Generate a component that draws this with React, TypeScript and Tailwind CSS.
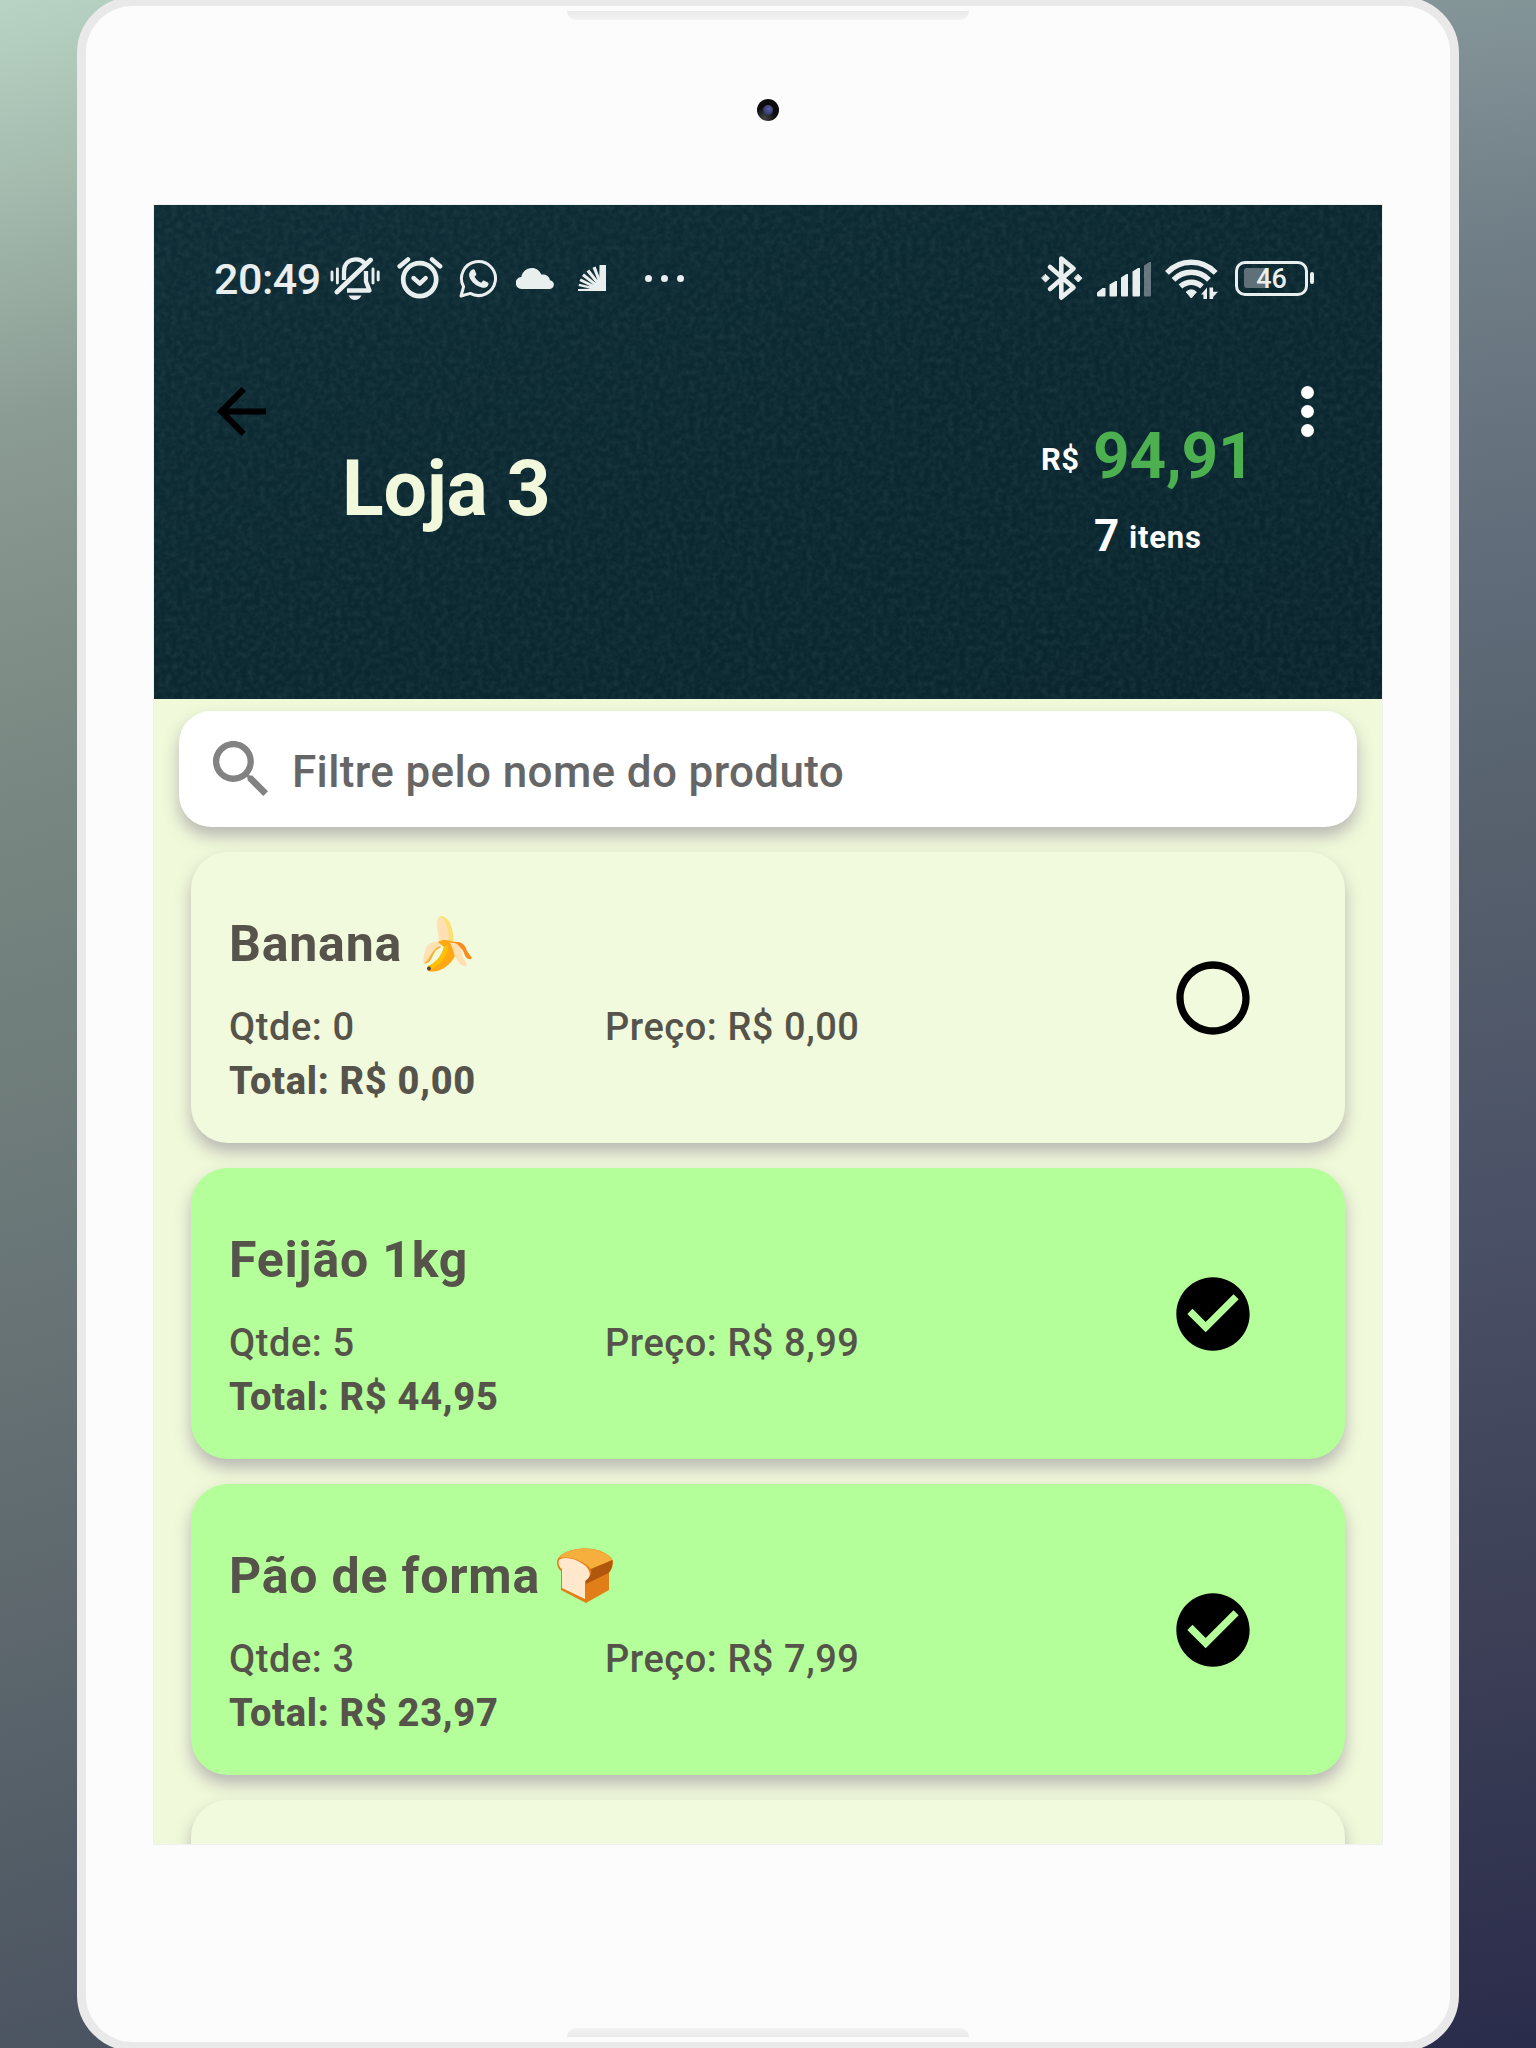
import type { ReactNode } from "react";

function MutedBell() {
  return (
    <svg width="50" height="44" viewBox="0 0 50 44" fill="none" stroke="#e9eeee" strokeWidth="4.300">
      <path d="M14 23V14.500C14 7 18.500 2.800 25.500 2.400c4-.2 7 1.400 9 3.600" />
      <path d="M36 14v10.500l3.500 9H17" strokeLinejoin="round" />
      <path d="M40.500 3 7 35" strokeWidth="4.800" strokeLinecap="round" />
      <path d="M2 15v8M7.400 12v14M43 12v14M48.200 15v8" strokeWidth="2.900" strokeLinecap="round" />
      <path d="M18.500 38.500h13c-1.500 3-4 4.500-6.500 4.500s-5-1.500-6.500-4.500Z" fill="#e9eeee" stroke="none" />
    </svg>
  );
}

function AlarmClock() {
  return (
    <svg width="46" height="42" viewBox="0 0 46 42" fill="none" stroke="#e9eeee" strokeLinecap="round" strokeLinejoin="round">
      <circle cx="22.700" cy="22.600" r="16.500" strokeWidth="4.700" />
      <path d="M16.500 21l6.300 5.700 5.900-5.700" strokeWidth="4.400" />
      <path d="M2.700 9.300 11 2.500M43.100 9.300 35 2.500" strokeWidth="4.600" />
    </svg>
  );
}

function WhatsApp() {
  return (
    <svg width="39" height="39" viewBox="0 0 39 39">
      <path d="M2 37l2.600-9.300A17 17 0 1 1 11.300 34.400Z" fill="none" stroke="#e9eeee" strokeWidth="3" strokeLinejoin="round" />
      <path d="M12.600 10.900c1-.9 2.500-1 3.100.2l1.500 3.600c.3.900-.1 1.500-1.600 3.100 1.400 2.700 3.600 4.700 6.600 6 1.800-2.200 2.200-2.500 3.100-2.100l3.500 1.700c.9.600.8 1.500.5 2.500-1 2.500-4.100 3.300-6.600 2.600-5.800-1.600-9.900-5-12-9.700-1.200-3-.6-6.200 1.900-7.900Z" fill="#e9eeee" />
    </svg>
  );
}

function Cloud() {
  return (
    <svg width="38" height="21" viewBox="0 0 38 21" fill="#e9eeee">
      <path d="M6 21a6 6 0 0 1-.7-12C6.500 3.500 10.500 0 15.800 0c4.500 0 7.800 2.500 9.500 6.500 5-.7 8.300 2 8.600 5.700 2.400.4 4 2.200 4 4.300 0 2.700-2 4.500-4.700 4.500Z" />
    </svg>
  );
}

function Fan() {
  return (
    <svg width="28" height="26" viewBox="0 0 28 26" fill="#e9eeee">
      <path d="M21.500 0H28v26h-7Z" />
      <path d="M22.500 22 14.500 2.800l3.200-1.300L25 22ZM22 23 8.500 6.500l2.700-2L25 22ZM21 24 4 11l2-2.500L24 23ZM20 25 1.500 16l1.300-2.600L24 24ZM20 25.500.5 21l.7-2.300L24 24ZM0 24l22-.5V26H0Z" />
    </svg>
  );
}

function Bluetooth() {
  return (
    <svg width="42" height="46" viewBox="0 0 42 46" fill="none" stroke="#e9eeee" strokeWidth="4.600" strokeLinejoin="round" strokeLinecap="round">
      <path d="M9 12l23.500 20.500L20.300 42.500V3.500L32.500 13.500 9 34" />
      <path d="M4.500 19.500 8.500 23.200 4.500 27 .8 23.200ZM37.300 19.500 41 23.200 37.300 27 33.500 23.200Z" fill="#e9eeee" strokeWidth="1" />
    </svg>
  );
}

function Signal() {
  return (
    <svg width="54" height="35" viewBox="0 0 54 35" fill="#e9eeee">
      <path d="M0 30.500 5.500 26H8.500v7.500Q8.500 34.500 7.500 34.500H1Q0 34.500 0 33.500ZM12.500 22.500 18.500 19h1.500v14.500q0 1-1 1H13.500q-1 0-1-1ZM24 15.500l5.500-3.500h1.500v21.500q0 1-1 1h-5q-1 0-1-1ZM35.500 9.500 41 6h2v27.500q0 1-1 1h-5.500q-1 0-1-1Z" />
      <path d="M47 3.500 52.500 0H54v33.500q0 1-1 1h-5q-1 0-1-1Z" opacity=".4" />
    </svg>
  );
}

function Wifi() {
  return (
    <svg width="54" height="41" viewBox="0 0 54 41" fill="none" stroke="#e9eeee" strokeWidth="5.400">
      <path d="M1.900 13.800Q12 3.200 26.300 3.200t24.400 10.600" />
      <path d="M8.500 20.800Q16 13.200 26.300 13.200T44 20.800" />
      <path d="M15.500 27.500q4.800-4.300 10.800-4.300T37 27.500" />
      <path d="M21.200 33q5.100-4.500 10.200 0l-5.100 6Z" fill="#e9eeee" stroke="#e9eeee" strokeWidth="1" />
      <path d="M36 35.500l6-7V40h-3.600v-4.500ZM44.500 40V28.500h3.600v4.300H53L48.100 38v2Z" fill="#e9eeee" stroke="none" />
    </svg>
  );
}

function Battery() {
  return (
    <div className="flex items-center">
      <div className="relative flex h-[35px] w-[73px] items-center justify-center rounded-[10px] border-[3.500px] border-[#e9eeee]">
        <div className="absolute left-[6px] h-[20px] w-[24px] rounded-[3px] bg-[#5f7078]" />
        <span className="relative pt-[2px] text-[27px] leading-[29px] font-medium text-[#e9eeee]">46</span>
      </div>
      <div className="ml-[2px] h-[12px] w-[4px] rounded-[2px] bg-[#e9eeee]" />
    </div>
  );
}

function StatusBar() {
  return (
    <div className="flex h-[46px] items-center pl-[60px] pr-[68px]">
      <span className="w-[116px] pt-[2px] text-[43px] leading-[46px] font-medium tracking-[-0.5px] text-[#e9eeee]">20:49</span>
      <div className="mt-[2px]"><MutedBell /></div>
      <div className="ml-[17px]"><AlarmClock /></div>
      <div className="ml-[16px]"><WhatsApp /></div>
      <div className="ml-[18px]"><Cloud /></div>
      <div className="ml-[24px]"><Fan /></div>
      <div className="ml-[39px] flex gap-[9px]">
        <i className="size-[7px] rounded-full bg-[#e9eeee]" />
        <i className="size-[7px] rounded-full bg-[#e9eeee]" />
        <i className="size-[7px] rounded-full bg-[#e9eeee]" />
      </div>
      <div className="ml-auto"><Bluetooth /></div>
      <div className="ml-[14px] mt-[3px]"><Signal /></div>
      <div className="ml-[14px] mt-[2px]"><Wifi /></div>
      <div className="ml-[16px]"><Battery /></div>
    </div>
  );
}

function FabricTexture() {
  return (
    <svg className="absolute inset-0 size-full">
      <filter id="grain" x="0" y="0" width="100%" height="100%">
        <feTurbulence type="fractalNoise" baseFrequency="0.17" numOctaves="2" seed="4" />
        <feColorMatrix values="0 0 0 0 0.25  0 0 0 0 0.36  0 0 0 0 0.38  1.200 0 0 0 -0.4" />
      </filter>
      <rect width="100%" height="100%" filter="url(#grain)" opacity=".17" />
    </svg>
  );
}

function Header() {
  return (
    <header className="relative h-[494px] shrink-0 bg-linear-to-br from-[#0f2d36] via-[#0b2831] to-[#09242d] pt-[50px]">
      <FabricTexture />
      <div className="relative">
        <StatusBar />
        <div className="flex pl-[63px] pt-[85px]">
          <svg className="mt-px" width="49" height="49" viewBox="4 4 16 16" fill="#000">
            <path d="M20 11H7.830l5.590-5.590L12 4l-8 8 8 8 1.410-1.410L7.830 13H20v-2z" />
          </svg>
          <h1 className="ml-[76px] mt-[58px] w-[699px] text-[77px] leading-[90px] font-bold tracking-[-0.2px] text-[#f1f8dc]">Loja 3</h1>
          <div className="mt-[34px] w-[260px]">
            <div className="flex items-baseline">
              <span className="relative -top-[8px] w-[52px] text-[31px] leading-[74px] font-bold tracking-[0.5px] text-white">R$</span>
              <span className="text-[64px] leading-[74px] font-bold tracking-[-0.2px] text-[#4caf50]">94,91</span>
            </div>
            <div className="mt-[5px] flex items-baseline pl-[53px]">
              <span className="w-[35px] text-[44px] leading-[52px] font-bold text-white">7</span>
              <span className="relative -top-[3px] text-[31px] font-bold tracking-[0.8px] text-white">itens</span>
            </div>
          </div>
          <div className="flex flex-col gap-[6px]">
            <i className="size-[13px] rounded-full bg-white" />
            <i className="size-[13px] rounded-full bg-white" />
            <i className="size-[13px] rounded-full bg-white" />
          </div>
        </div>
      </div>
    </header>
  );
}

function Banana() {
  return (
    <svg width="58" height="58" viewBox="0 0 58 58">
      <path d="M20 3c3-4 11 0 13 8 2 7 3 13 2 18l-14-1C21 18 17 9 20 3Z" fill="#ffe0b2" />
      <path d="M22 1.500c5-1.500 10 4 12 12 1.500 6 1.500 13 .5 17l-4-2C32 19 29 5 22 1.500Z" fill="#fde074" />
      <path d="M22 27c-8-1-13 2-15 9-1 4-2 8-1.500 12 4-1 6-5 8-9s5-8 10-9Z" fill="#ffe0b2" />
      <path d="M6 48c4-2 5-6 8-10s5-7 9-7l-1 2c-6 2-7 9-10 13-2 2-4 3-6 2Z" fill="#f9b233" />
      <path d="M20 27c5-3 10-2 16 0 4 9 2 16-5 22-6 6-14 9-21 7-1-2-1-3 0-5 8-3 14-11 16-19Z" fill="#ffa813" />
      <path d="M10 51c8-3 14-11 16-19l4-3c1 11-8 22-19 26Z" fill="#ffc107" />
      <path d="M34 27c9-1 13 2 15 9l5 7c-2 3-7 0-8-5-2-5-6-8-12-10Z" fill="#f78c1f" />
      <path d="M32 28c8-1 11 4 12 11 1 5 4 8 5 11-3 3-8-1-11-7-3-5-3-11-6-15Z" fill="#ffe0b2" />
      <circle cx="11" cy="53.500" r="2" fill="#5d4037" />
    </svg>
  );
}

function Bread() {
  return (
    <svg width="58" height="58" viewBox="0 0 58 58">
      <path d="M1 15C2 7 14 1.500 29 1.500S55 8 57 14c0 5-1 8-4 12v17L30 56 5 43V24c-3-2-4-6-4-9Z" fill="#e27e17" />
      <path d="M3 11C7 5 17 1.500 29 1.500S54 7 56.500 13L35 22C28 14 15 9 3 11Z" fill="#f6af3c" />
      <path d="M35 22 56.500 13c0 6-1 9-4 13L30 37v-4c4-3 6-6 5-11Z" fill="#af570d" />
      <path d="M3 13c4-4 16-2 24 4 6 4 8 10 6 13-1 2-3 3-4 4v18L6 41V22c-3-2-4-6-3-9Z" fill="#ffe8cb" />
    </svg>
  );
}

function StatusIcon({ checked }: { checked: boolean }) {
  return (
    <svg width="88" height="88" viewBox="0 0 24 24">
      {checked ? (
        <path d="M12 2C6.480 2 2 6.480 2 12s4.480 10 10 10 10-4.480 10-10S17.520 2 12 2zm-2 15l-5-5 1.410-1.410L10 14.170l7.590-7.590L19 8l-9 9z" />
      ) : (
        <path d="M12 2C6.480 2 2 6.480 2 12s4.480 10 10 10 10-4.480 10-10S17.520 2 12 2zm0 18c-4.420 0-8-3.580-8-8s3.580-8 8-8 8 3.580 8 8-3.580 8-8 8z" />
      )}
    </svg>
  );
}

type Item = { name: string; emoji?: ReactNode; qty: string; price: string; total: string; checked: boolean };

const items: Item[] = [
  { name: "Banana", emoji: <Banana />, qty: "0", price: "0,00", total: "0,00", checked: false },
  { name: "Feijão 1kg", qty: "5", price: "8,99", total: "44,95", checked: true },
  { name: "Pão de forma", emoji: <Bread />, qty: "3", price: "7,99", total: "23,97", checked: true },
];

function ProductCard({ item }: { item: Item }) {
  return (
    <article
      className={`flex h-[291px] shrink-0 items-center rounded-[37px] pl-[38px] pr-[88px] text-[#56534b] shadow-[0_9px_16px_rgba(90,70,110,0.36)] ${
        item.checked ? "bg-[#b4ff99]" : "bg-[#f1fadc]"
      }`}
    >
      <div className="grow self-start pt-[62px]">
        <div className="flex h-[60px] items-center gap-[16px]">
          <h2 className="text-[50px] leading-[60px] font-bold tracking-[0.8px]">{item.name}</h2>
          {item.emoji}
        </div>
        <div className="mt-[27px] flex text-[38px] leading-[53px] font-medium tracking-[0.55px]">
          <span className="w-[376px]">Qtde: {item.qty}</span>
          <span>Preço: R$ {item.price}</span>
        </div>
        <div className="text-[38px] leading-[54px] font-extrabold tracking-[0.7px]">Total: R$ {item.total}</div>
      </div>
      <StatusIcon checked={item.checked} />
    </article>
  );
}

export default function App() {
  return (
    <div className="flex h-[2048px] w-[1536px] overflow-hidden font-[Roboto,sans-serif]">
      <div className="w-[150px] shrink-0 bg-linear-[164deg,#b8d3c4_0%,#a4bbae_9%,#8b9c94_20%,#788781_38%,#6b7878_58%,#5d676d_78%,#4a5360_100%]" />
      <div className="relative -mx-[73px] -mt-[3px] flex h-[2054px] w-[1382px] shrink-0 flex-col items-center rounded-[56px] border-[9px] border-[#e9e9e9] bg-[#fcfcfc]">
        <div className="mt-[5px] h-[9px] w-[402px] rounded-b-[9px] bg-linear-to-b from-[#eaeaea] to-[#f2f2f2]" />
        <div className="mt-[79px] flex size-[22px] items-center justify-center rounded-full bg-[radial-gradient(circle_at_35%_85%,#444_0%,#0c0c0c_45%)]">
          <div className="size-[10px] rounded-full bg-[radial-gradient(circle_at_60%_40%,#5a5fa0,#25264f)]" />
        </div>
        <div className="mt-[84px] flex h-[1639px] w-[1228px] shrink-0 flex-col overflow-hidden bg-[#f0f9da] outline outline-[#efefef]">
          <Header />
          <div className="mx-[25px] mt-[12px] flex h-[116px] shrink-0 items-center rounded-[32px] bg-white pl-[34px] shadow-[0_9px_16px_rgba(90,70,110,0.36)]">
            <svg className="mb-[1px]" width="55" height="55" viewBox="3 3 17.490 17.490" fill="#828282">
              <path d="M15.500 14h-.790l-.280-.270C15.410 12.590 16 11.110 16 9.500 16 5.910 13.090 3 9.500 3S3 5.910 3 9.500 5.910 16 9.500 16c1.610 0 3.090-.590 4.230-1.570l.270.280v.790l5 4.990L20.490 19l-4.990-5zm-6 0C7.010 14 5 11.990 5 9.500S7.010 5 9.500 5 14 7.010 14 9.500 11.990 14 9.500 14z" />
            </svg>
            <span className="ml-[24px] mt-[5px] text-[44px] leading-[54px] font-medium tracking-[0.36px] text-[#666]">Filtre pelo nome do produto</span>
          </div>
          <div className="mx-[37px] mt-[25px] flex flex-col gap-[25px]">
            {items.map((item) => (
              <ProductCard key={item.name} item={item} />
            ))}
            <div className="h-[291px] shrink-0 rounded-[37px] bg-[#f1fadc] shadow-[0_9px_16px_rgba(90,70,110,0.36)]" />
          </div>
        </div>
        <div className="mt-[184px] h-[9px] w-[402px] rounded-t-[9px] bg-linear-to-t from-[#eaeaea] to-[#f2f2f2]" />
      </div>
      <div className="w-[150px] shrink-0 bg-linear-[172deg,#859699_0%,#6f7d86_13%,#606c79_28%,#56606d_42%,#4a5066_60%,#3c3f56_80%,#2a2c4b_100%]" />
    </div>
  );
}
